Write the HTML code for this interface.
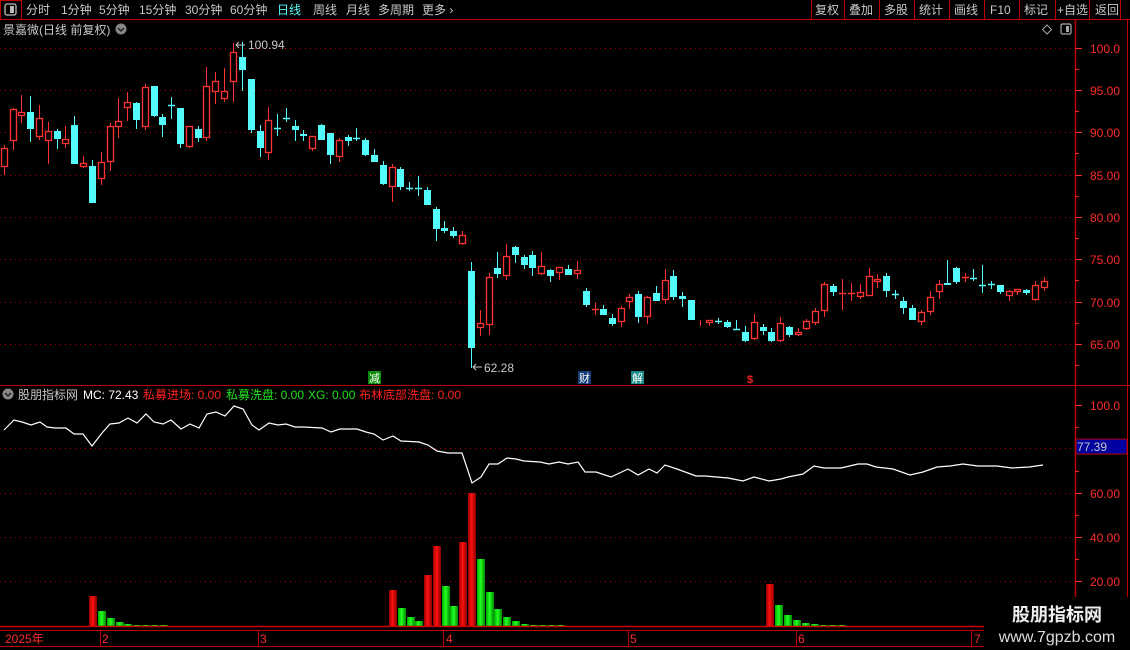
<!DOCTYPE html>
<html><head><meta charset="utf-8">
<style>
html,body{margin:0;padding:0;background:#000;width:1130px;height:650px;overflow:hidden}
body{position:relative;font-family:"Liberation Sans","Noto Sans CJK SC",sans-serif}
svg{position:absolute;left:0;top:0}
text{font-family:"Liberation Sans","Noto Sans CJK SC",sans-serif}
</style></head><body>
<svg id="s" width="1130" height="650" viewBox="0 0 1130 650" xmlns="http://www.w3.org/2000/svg">
<defs>
<linearGradient id="gr" x1="0" x2="1" y1="0" y2="0"><stop offset="0" stop-color="#900"/><stop offset="0.45" stop-color="#ff1010"/><stop offset="1" stop-color="#800"/></linearGradient>
<linearGradient id="gg" x1="0" x2="1" y1="0" y2="0"><stop offset="0" stop-color="#0a0"/><stop offset="0.45" stop-color="#2f2"/><stop offset="1" stop-color="#080"/></linearGradient>
</defs>
<line x1="0" y1="19.5" x2="1130" y2="19.5" stroke="#c00000"/>
<rect x="0.5" y="0.5" width="21" height="19" fill="none" stroke="#c00000"/>
<rect x="5" y="4" width="11" height="11" rx="2" fill="none" stroke="#bbb" stroke-width="1.3"/><rect x="10" y="6" width="4" height="7" fill="#bbb"/>
<g font-size="12" fill="#c8c8c8">
<text x="26" y="14">分时</text><text x="61" y="14">1分钟</text><text x="99" y="14">5分钟</text><text x="139" y="14">15分钟</text><text x="185" y="14">30分钟</text><text x="230" y="14">60分钟</text>
<text x="277" y="14" fill="#54fcfc">日线</text><text x="313" y="14">周线</text><text x="346" y="14">月线</text><text x="378" y="14">多周期</text><text x="422" y="14">更多 ›</text>
</g>
<g stroke="#c00000"><line x1="811.5" y1="0" x2="811.5" y2="19"/><line x1="844.5" y1="0" x2="844.5" y2="19"/><line x1="879.5" y1="0" x2="879.5" y2="19"/><line x1="914.5" y1="0" x2="914.5" y2="19"/><line x1="949.5" y1="0" x2="949.5" y2="19"/><line x1="984.5" y1="0" x2="984.5" y2="19"/><line x1="1019.5" y1="0" x2="1019.5" y2="19"/><line x1="1055.5" y1="0" x2="1055.5" y2="19"/><line x1="1089.5" y1="0" x2="1089.5" y2="19"/><line x1="1120.5" y1="0" x2="1120.5" y2="19"/></g>
<g font-size="12" fill="#c8c8c8"><text x="815" y="14">复权</text><text x="849" y="14">叠加</text><text x="884" y="14">多股</text><text x="919" y="14">统计</text><text x="954" y="14">画线</text><text x="990" y="14">F10</text><text x="1024" y="14">标记</text><text x="1057" y="14">+自选</text><text x="1095" y="14">返回</text></g>
<text x="3" y="34" font-size="12" fill="#c8c8c8">景嘉微(日线 前复权)</text>
<circle cx="121" cy="29" r="5.5" fill="#888"/><path d="M118 28l3 3 3-3" stroke="#222" stroke-width="1.5" fill="none"/>
<path d="M1047 25l4.5 4.5-4.5 4.5-4.5-4.5z" fill="none" stroke="#aaa"/>
<rect x="1061" y="24" width="10" height="10" rx="1.5" fill="none" stroke="#aaa" stroke-width="1.2"/><rect x="1066" y="26" width="3" height="6" fill="#aaa"/>
<line x1="1075.5" y1="20" x2="1075.5" y2="630" stroke="#c00000" stroke-width="1.5"/>
<line x1="1127.5" y1="20" x2="1127.5" y2="630" stroke="#c00000"/>
<line x1="0" y1="385.5" x2="1130" y2="385.5" stroke="#c00000"/>
<g id="grid" stroke="#a00000" stroke-dasharray="1 4"></g>
<g id="axl" font-size="12" fill="#ff2a2a"></g>
<g id="cd"></g>
<g font-size="12" fill="#c8c8c8"><text x="248" y="49">100.94</text><text x="484" y="372">62.28</text></g>
<path d="M245 45h-9m0 0l3-3m-3 3l3 3" stroke="#c8c8c8" fill="none"/>
<path d="M482 367h-9m0 0l3-3m-3 3l3 3" stroke="#c8c8c8" fill="none"/>
<rect x="368" y="371" width="13" height="13" fill="#0a8a0a"/><text x="369" y="382" font-size="11" fill="#fff">减</text>
<rect x="578" y="371" width="13" height="13" fill="#123c78"/><text x="579" y="382" font-size="11" fill="#fff">财</text>
<rect x="631" y="371" width="13" height="13" fill="#1a8888"/><text x="632" y="382" font-size="11" fill="#fff">解</text>
<text x="747" y="383" font-size="11" font-weight="bold" fill="#ff2020">$</text>
<circle cx="8" cy="394" r="5.5" fill="#888"/><path d="M5 393l3 3 3-3" stroke="#222" stroke-width="1.5" fill="none"/>
<g font-size="12"><text x="18" y="399" fill="#c8c8c8">股朋指标网</text><text x="83" y="399" fill="#fff">MC: 72.43</text>
<text x="143" y="399" fill="#ff2020">私募进场: 0.00</text><text x="226" y="399" fill="#20e020">私募洗盘: 0.00</text><text x="308" y="399" fill="#20e020">XG: 0.00</text><text x="359" y="399" fill="#ff2020">布林底部洗盘: 0.00</text></g>
<polyline id="mc" fill="none" stroke="#fff" stroke-width="1.2"/>
<g id="bars"></g>
<rect x="1076" y="439" width="51" height="15" fill="#0000a0" stroke="#c00000"/>
<text x="1077" y="451" font-size="12" fill="#c8c8c8">77.39</text>
<line x1="0" y1="626.5" x2="1075" y2="626.5" stroke="#d00000" stroke-width="1.5"/>
<line x1="0" y1="630.5" x2="985" y2="630.5" stroke="#c00000"/>
<line x1="0" y1="646.5" x2="985" y2="646.5" stroke="#c00000"/>
<g stroke="#c00000"><line x1="100.5" y1="630" x2="100.5" y2="646"/><line x1="258.5" y1="630" x2="258.5" y2="646"/><line x1="443.5" y1="630" x2="443.5" y2="646"/><line x1="628.5" y1="630" x2="628.5" y2="646"/><line x1="796.5" y1="630" x2="796.5" y2="646"/><line x1="971.5" y1="630" x2="971.5" y2="646"/></g>
<g font-size="12" fill="#ff2a2a"><text x="5" y="643">2025年</text><text x="102" y="643">2</text><text x="260" y="643">3</text><text x="446" y="643">4</text><text x="630" y="643">5</text><text x="798" y="643">6</text><text x="974" y="643">7</text></g>
<rect x="984" y="597" width="146" height="53" fill="#000"/>
<text x="1057" y="621" font-size="18" font-weight="bold" fill="#eee" text-anchor="middle">股朋指标网</text>
<text x="1057" y="642" font-size="16" fill="#ddd" text-anchor="middle">www.7gpzb.com</text>
</svg>
<script>
var NS="http://www.w3.org/2000/svg";
function el(p,t,a){var e=document.createElementNS(NS,t);for(var k in a)e.setAttribute(k,a[k]);p.appendChild(e);return e;}
var g=document.getElementById('grid'),ax=document.getElementById('axl');
var py=[48,90,132,175,217,259,302,344],pl=["100.0","95.00","90.00","85.00","80.00","75.00","70.00","65.00"];
py.forEach(function(y,i){el(g,'line',{x1:0,y1:y+.5,x2:1075,y2:y+.5});
 var t=el(ax,'text',{x:1090,y:y+5});t.textContent=pl[i];
 el(ax,'line',{x1:1075,y1:y+.5,x2:1082,y2:y+.5,stroke:'#ff2a2a'});
 el(ax,'line',{x1:1075,y1:y+21.5,x2:1079,y2:y+21.5,stroke:'#ff2a2a'});});
[448,493,537,581].forEach(function(y){el(g,'line',{x1:0,y1:y+.5,x2:1075,y2:y+.5});});
[[405,"100.0"],[493,"60.00"],[537,"40.00"],[581,"20.00"]].forEach(function(a){var t=el(ax,'text',{x:1090,y:a[0]+5});t.textContent=a[1];el(ax,'line',{x1:1075,y1:a[0]+.5,x2:1082,y2:a[0]+.5,stroke:'#ff2a2a'});});
[427,471,515,559,603].forEach(function(y){el(ax,'line',{x1:1075,y1:y+.5,x2:1079,y2:y+.5,stroke:'#ff2a2a'});});
var C=[[4,148,167,145,175,1],[13,109,141,108,150,1],[21,112,116,95,123,1],[30,112,129,96,142,0],[39,118,137,105,140,1],[48,131,141,122,164,1],[57,131,139,129,149,0],[65,139,144,126,148,1],[74,125,164,116,164,0],[83,163,167,156,168,1],[92,166,203,160,203,0],[101,162,179,152,185,1],[110,126,162,123,171,1],[118,121,127,98,138,1],[127,102,108,92,121,1],[136,103,120,102,129,0],[145,87,127,84,130,1],[154,86,116,86,117,0],[162,117,125,114,137,0],[171,105,105,97,119,0],[180,108,144,108,148,0],[189,126,147,126,148,1],[198,129,138,126,142,0],[206,86,138,67,141,1],[215,81,92,72,104,1],[224,91,99,68,102,1],[233,52,82,43,102,1],[242,57,70,42,91,0],[251,79,130,79,133,0],[260,131,148,125,157,0],[268,120,153,107,160,1],[277,128,128,114,136,0],[286,118,118,108,122,0],[295,126,130,120,141,0],[303,134,136,130,141,0],[312,136,149,136,151,1],[321,125,140,124,140,0],[330,133,155,133,164,0],[339,140,157,138,162,1],[348,137,141,135,146,0],[356,138,138,128,141,0],[365,140,155,138,156,0],[374,155,162,149,162,0],[383,165,184,161,185,0],[392,167,187,164,202,1],[400,169,187,167,190,0],[409,188,188,182,191,0],[418,188,188,176,196,0],[427,190,205,187,205,0],[436,209,229,207,241,0],[444,228,231,221,233,0],[453,231,236,227,238,0],[462,235,244,231,245,1],[471,271,348,262,368,0],[480,323,328,310,336,1],[489,277,325,273,335,1],[497,268,274,252,278,0],[506,256,276,244,280,1],[515,247,255,246,263,0],[524,257,265,255,269,0],[532,255,268,251,276,0],[541,266,274,252,275,1],[550,270,276,269,282,0],[559,267,273,267,280,1],[568,269,275,265,275,0],[577,270,274,261,279,1],[586,291,305,288,307,0],[595,309,309,303,315,1],[603,309,315,305,315,0],[612,318,324,314,326,0],[621,308,322,306,327,1],[629,297,302,294,309,1],[638,294,317,291,323,0],[647,297,317,296,324,1],[656,293,301,286,301,0],[665,280,300,269,304,1],[673,276,297,270,300,0],[682,296,299,292,307,0],[691,300,320,300,320,0],[700,323,324,320,326,1],[709,320,323,320,326,1],[718,321,321,318,324,0],[727,322,327,320,328,0],[736,329,329,320,330,0],[745,332,341,326,342,0],[754,322,339,314,340,1],[763,327,331,324,335,0],[771,332,341,328,342,0],[780,323,341,317,342,1],[789,327,335,326,337,0],[798,332,335,328,336,1],[806,321,329,319,330,1],[815,311,323,308,325,1],[824,284,311,282,317,1],[833,286,292,284,296,0],[842,293,293,279,310,1],[851,293,293,283,301,1],[860,292,297,284,299,1],[869,276,296,268,296,1],[877,279,282,274,288,1],[886,276,291,273,297,0],[895,294,294,290,299,0],[903,301,308,297,314,0],[912,308,320,305,320,0],[921,312,322,310,325,1],[930,297,312,291,315,1],[939,284,292,280,299,1],[947,283,285,260,285,0],[956,268,282,267,284,0],[965,277,277,273,282,1],[973,278,278,269,281,0],[982,285,285,265,293,0],[991,284,284,281,289,0],[1000,285,292,285,294,0],[1009,291,296,290,301,1],[1017,289,292,289,295,1],[1026,290,293,289,295,0],[1035,285,300,281,301,1],[1044,281,288,277,291,1]];
var cd=document.getElementById('cd');
C.forEach(function(c){var x=c[0],col=c[5]?'#ff3232':'#54fcfc';
 el(cd,'line',{x1:x+.5,y1:c[3],x2:x+.5,y2:c[4],stroke:col});
 var h=c[2]-c[1];
 if(h<1){el(cd,'line',{x1:x-3,y1:c[1]+.5,x2:x+4,y2:c[1]+.5,stroke:col,'stroke-width':1.5});}
 else if(c[5]){el(cd,'rect',{x:x-2.5,y:c[1]+.5,width:6,height:h-1,fill:'#000',stroke:col,'stroke-width':1.3});}
 else{el(cd,'rect',{x:x-3,y:c[1],width:7,height:h,fill:col});}
});
var P=[[4,430],[14,420],[22,422],[31,425],[40,422],[47,427],[55,428],[66,428],[74,434],[83,434],[92,446],[102,433],[110,424],[119,423],[128,418],[137,423],[146,414],[154,422],[163,424],[171,420],[181,429],[190,424],[199,428],[207,414],[216,412],[225,416],[234,406],[243,409],[252,425],[259,430],[269,423],[278,425],[286,424],[295,427],[303,427],[322,428],[331,432],[340,429],[357,429],[366,432],[374,434],[383,440],[393,436],[401,441],[419,442],[428,445],[437,451],[448,453],[462,453],[472,483],[481,477],[489,464],[498,464],[507,458],[516,459],[524,461],[540,462],[549,464],[559,462],[568,464],[578,462],[585,472],[596,472],[611,477],[628,469],[638,475],[649,469],[657,473],[665,465],[677,469],[696,476],[705,476],[728,478],[743,481],[754,477],[769,481],[781,479],[788,477],[803,474],[814,466],[824,468],[841,468],[858,464],[867,464],[876,467],[893,469],[910,475],[923,472],[937,467],[950,466],[963,464],[978,466],[997,466],[1012,468],[1029,467],[1043,465]];
document.getElementById('mc').setAttribute('points',P.map(function(p){return p.join(',')}).join(' '));
var B=[[89,596,1],[98,611,0],[107,618,0],[116,622,0],[124,624,0],[133,625,0],[142,625,0],[151,625,0],[160,625,0],
[389,590,1],[398,608,0],[407,617,0],[415,621,0],[424,575,1],[433,546,1],[442,586,0],[450,606,0],[459,542,1],[468,493,1],[477,559,0],[486,592,0],[494,609,0],[503,617,0],[512,621,0],[521,624,0],[530,625,0],[539,625,0],[548,625,0],[557,625,0],
[766,584,1],[775,605,0],[784,615,0],[793,620,0],[802,623,0],[811,624,0],[820,625,0],[829,625,0],[838,625,0]];
var bg=document.getElementById('bars');
B.forEach(function(b){el(bg,'rect',{x:b[0],y:b[1],width:8,height:626-b[1],fill:b[2]?'url(#gr)':'url(#gg)'});});
</script>
</body></html>
